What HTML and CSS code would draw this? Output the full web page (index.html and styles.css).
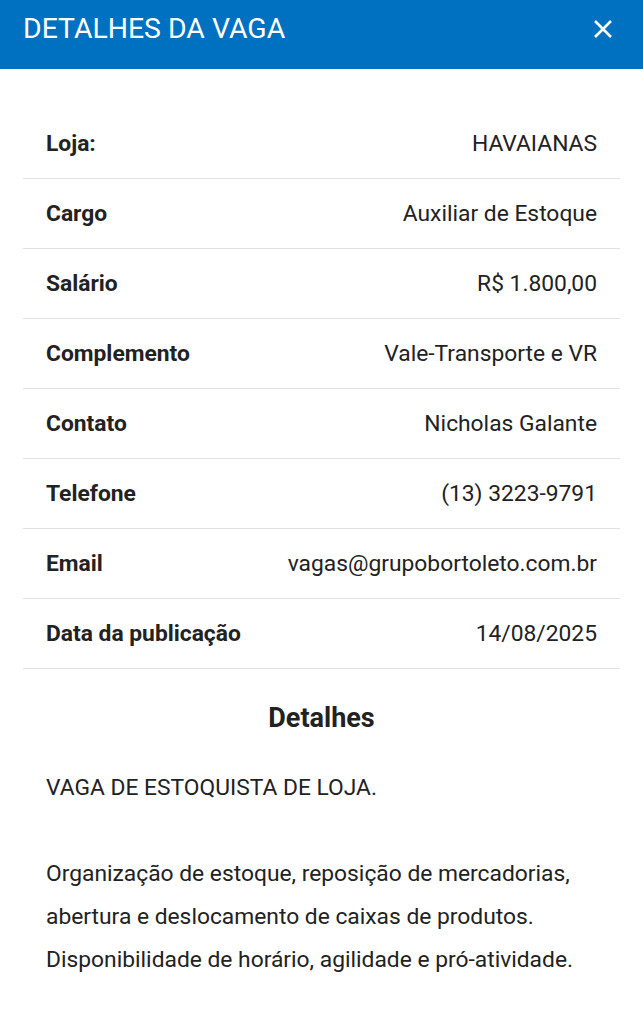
FILE: index.html
```html
<!DOCTYPE html>
<html lang="pt-BR">
<head>
    <meta charset="UTF-8" />
    <meta name="viewport" content="width=device-width, initial-scale=1.0">
    <title>Detalhes da vaga</title>
    <link rel="stylesheet" href="styles.css">
</head>
<body>
    <header class="modal-header">
        <h1>DETALHES DA VAGA</h1>
        <button type="button" class="close-btn" aria-label="Fechar">
            <svg width="20" height="20" viewBox="0 0 20 20">
                <path d="M2 2 L18 18 M18 2 L2 18" stroke="#fff" stroke-width="2.6" stroke-linecap="butt" fill="none"/>
            </svg>
        </button>
    </header>

    <main class="modal-body">
        <table class="info-table">
            <tr><th>Loja:</th><td>HAVAIANAS</td></tr>
            <tr><th>Cargo</th><td>Auxiliar de Estoque</td></tr>
            <tr><th>Salário</th><td>R$ 1.800,00</td></tr>
            <tr><th>Complemento</th><td>Vale-Transporte e VR</td></tr>
            <tr><th>Contato</th><td>Nicholas Galante</td></tr>
            <tr><th>Telefone</th><td>(13) 3223-9791</td></tr>
            <tr><th>Email</th><td>vagas@grupobortoleto.com.br</td></tr>
            <tr><th>Data da publicação</th><td>14/08/2025</td></tr>
        </table>

        <h2>Detalhes</h2>
        <p class="description">
            VAGA DE ESTOQUISTA DE LOJA.<br><br>
            Organização de estoque, reposição de mercadorias, abertura e deslocamento de caixas de produtos. Disponibilidade de horário, agilidade e pró-atividade.
        </p>
    </main>
</body>
</html>
```

FILE: styles.css
```css
body {
    margin: 0;
    font-family: Roboto, "Liberation Sans", sans-serif;
    background: #fff;
    color: #222;
}

.modal-header {
    background-color: #0070c0;
    color: #fff;
    height: 69px;
    display: flex;
    align-items: center;
    justify-content: space-between;
    padding: 0 30px 12px 23px;
    box-sizing: border-box;
}

.modal-header h1 {
    margin: 0;
    font-size: 28.4px;
    font-weight: 400;
}

.close-btn {
    background: none;
    border: none;
    padding: 0;
    cursor: pointer;
    display: flex;
}

.modal-body {
    padding: 40px 23px 0;
}

.info-table {
    width: 100%;
    border-collapse: collapse;
}

.info-table th,
.info-table td {
    height: 69px;
    padding: 0 23px;
    font-size: 22.8px;
    border-bottom: 1px solid #e2e2e2;
    white-space: nowrap;
}

.info-table th {
    text-align: left;
    font-weight: 700;
}

.info-table td {
    text-align: right;
    font-weight: 400;
}

h2 {
    text-align: center;
    font-size: 27px;
    font-weight: 700;
    margin: 33px 0 0;
}

.description {
    font-size: 22.8px;
    line-height: 43px;
    margin: 32px 0 0;
    padding: 0 23px;
}
```
